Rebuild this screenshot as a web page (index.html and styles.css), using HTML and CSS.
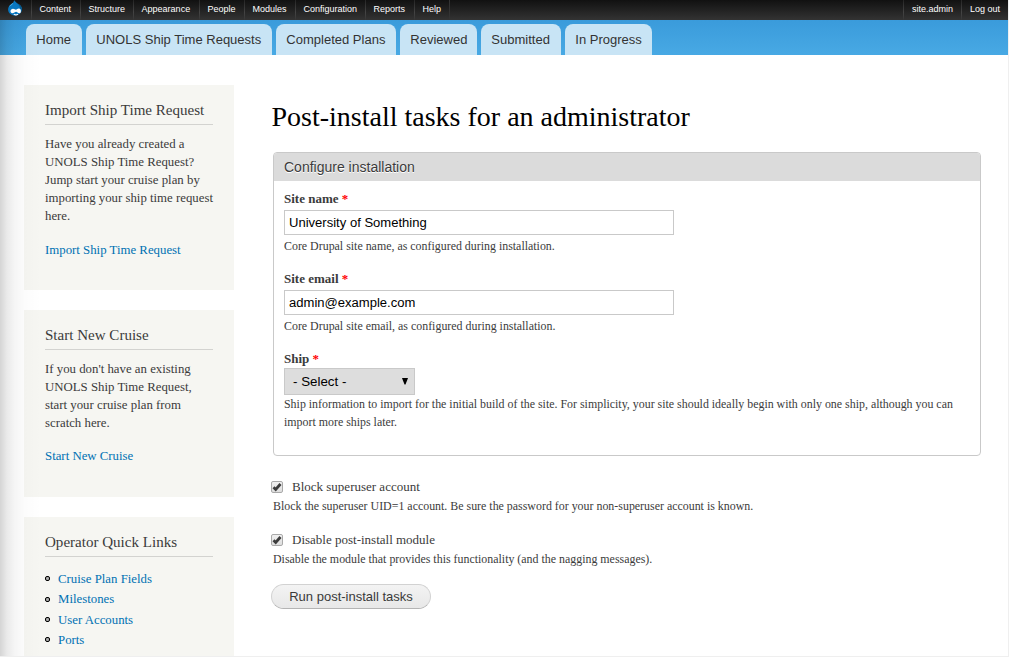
FILE: index.html
```html
<!DOCTYPE html>
<html lang="en">
<head>
<meta charset="utf-8">
<title>Post-install tasks for an administrator</title>
<link rel="stylesheet" href="styles.css">
</head>
<body>
<div class="page">
  <nav class="toolbar">
    <a class="logo" href="#" aria-label="Home">
      <svg width="14" height="16" viewBox="0 0 14 16">
        <path d="M6.2.2C6.4 2 4.9 3 3.2 4.2 1.500 5.400.1 7 .1 9.500c0 3.400 3.100 6.100 6.900 6.100s6.900-2.700 6.900-6.300c0-2.500-1.500-4-3.400-5.200C8.900 3.100 7.700 2.300 6.200.2z" fill="#0877c0"/>
        <path d="M6.2.2C6.400 2 4.900 3 3.200 4.200 2.200 4.900 1.300 5.700.8 6.700c3-1 4.600-3 5.400-6.500z" fill="#4bafe5"/>
        <path d="M8.500 3c2 1.600 3.600 3.200 3.600 5.800 0 1 .7 1.200 1.500 2.200.9-3-.5-5.400-3.100-6.900z" fill="#075789"/>
        <path d="M2.500 11.300c0-1.700 1.200-2.600 2.500-2.600 1.400 0 2.100 1 2.900 1 .9 0 1.600-1.200 3-1.200 1.300 0 2 1 2 2.500s-.5 2.300-1.600 2.300c-1.400 0-2.100-1.500-3.200-1.500s-2.300 1.400-3.800 1.400c-1.200 0-1.800-.8-1.800-1.900z" fill="#fff"/>
        <path d="M5.800 14.200c1.200.8 3 .8 4.200 0" fill="none" stroke="#fff" stroke-width="1.100"/>
      </svg>
    </a>
    <a class="item w49" href="#">Content</a>
    <a class="item w53" href="#">Structure</a>
    <a class="item w66" href="#">Appearance</a>
    <a class="item w45" href="#">People</a>
    <a class="item w51" href="#">Modules</a>
    <a class="item w70" href="#">Configuration</a>
    <a class="item w49" href="#">Reports</a>
    <a class="item w35" href="#">Help</a>
    <span class="toolbar-end"></span>
    <a class="item user" href="#">site.admin</a>
    <a class="item logout" href="#">Log out</a>
  </nav>
  <header class="tabs">
    <a class="tab home" href="#">Home</a>
    <a class="tab requests" href="#">UNOLS Ship Time Requests</a>
    <a class="tab completed" href="#">Completed Plans</a>
    <a class="tab reviewed" href="#">Reviewed</a>
    <a class="tab submitted" href="#">Submitted</a>
    <a class="tab progress" href="#">In Progress</a>
  </header>
  <div class="columns">
    <aside class="sidebar">
      <section class="block import">
        <h2>Import Ship Time Request</h2>
        <p>Have you already created a<br>UNOLS Ship Time Request?<br>Jump start your cruise plan by<br>importing your ship time request<br>here.</p>
        <a href="#">Import Ship Time Request</a>
      </section>
      <section class="block start">
        <h2>Start New Cruise</h2>
        <p>If you don't have an existing<br>UNOLS Ship Time Request,<br>start your cruise plan from<br>scratch here.</p>
        <a href="#">Start New Cruise</a>
      </section>
      <section class="block links">
        <h2>Operator Quick Links</h2>
        <ul>
          <li><a href="#">Cruise Plan Fields</a></li>
          <li><a href="#">Milestones</a></li>
          <li><a href="#">User Accounts</a></li>
          <li><a href="#">Ports</a></li>
        </ul>
      </section>
    </aside>
    <main class="content">
      <h1>Post-install tasks for an administrator</h1>
      <section class="fieldset">
        <div class="legend">Configure installation</div>
        <div class="fields">
          <div class="field">
            <label for="name">Site name <b>*</b></label>
            <input class="text" id="name" type="text" value="University of Something">
            <div class="description">Core Drupal site name, as configured during installation.</div>
          </div>
          <div class="field">
            <label for="email">Site email <b>*</b></label>
            <input class="text" id="email" type="text" value="admin@example.com">
            <div class="description">Core Drupal site email, as configured during installation.</div>
          </div>
          <div class="field ship">
            <label>Ship <b>*</b></label>
            <div class="select"><span>- Select -</span><svg width="6" height="7" viewBox="0 0 6 7"><path d="M0 0h6L3.500 6.500h-1z" fill="#000"/></svg></div>
            <div class="description">Ship information to import for the initial build of the site. For simplicity, your site should ideally begin with only one ship, although you can<br>import more ships later.</div>
          </div>
        </div>
      </section>
      <div class="option">
        <div class="option-label"><span class="checkbox"><svg width="10" height="10" viewBox="0 0 10 10"><path d="M1.500 5.200 3.700 7.400 8.500 2" fill="none" stroke="#3c3c3c" stroke-width="2.800"/></svg></span>Block superuser account</div>
        <div class="description">Block the superuser UID=1 account. Be sure the password for your non-superuser account is known.</div>
      </div>
      <div class="option">
        <div class="option-label"><span class="checkbox"><svg width="10" height="10" viewBox="0 0 10 10"><path d="M1.500 5.200 3.700 7.400 8.500 2" fill="none" stroke="#3c3c3c" stroke-width="2.800"/></svg></span>Disable post-install module</div>
        <div class="description">Disable the module that provides this functionality (and the nagging messages).</div>
      </div>
      <button class="run" type="button">Run post-install tasks</button>
    </main>
  </div>
  <div class="edge-shadow"></div>
</div>
</body>
</html>
```

FILE: styles.css
```css
*, *::before { box-sizing: border-box; }
html, body { margin: 0; height: 657px; overflow: hidden; }
body { background: #efefef; color: #3b3b3b; font-family: "Liberation Serif", serif; font-size: 13px; line-height: 18px; }
a { color: #0071b3; text-decoration: none; }
.page { position: relative; width: 1008px; height: 656px; background: #fff; overflow: hidden; }

.toolbar { display: flex; height: 20px; background: linear-gradient(#111, #333); font: 9px/18px "Liberation Sans", sans-serif; }
.logo { width: 31px; height: 20px; padding-left: 8px; }
.logo svg { display: block; }
.item { height: 20px; padding-left: 7.600px; border-left: 1px solid; border-image: linear-gradient(#222, #444 60%, #333) 1; color: #fff; white-space: nowrap; }
.w49 { width: 49px; }
.w53 { width: 53px; }
.w66 { width: 66px; }
.w45 { width: 45px; }
.w51 { width: 51px; }
.w70 { width: 70px; }
.w35 { width: 35px; }
.toolbar-end { flex: 1; border-left: 1px solid #333; }
.user { width: 58px; padding-left: 8px; }
.logout { width: 47px; padding-left: 8px; }

.tabs { display: flex; gap: 4px; height: 35px; padding: 4px 0 0 26px; background: linear-gradient(#3a9bdb, #48a9e4); }
.tab { height: 31px; border-radius: 8px 8px 0 0; background: #c8e4f5; color: #333; font: 13.030px/31px "Liberation Sans", sans-serif; padding-left: 10.300px; white-space: nowrap; }
.home { width: 56px; }
.requests { width: 186px; }
.completed { width: 120px; }
.reviewed { width: 77px; }
.submitted { width: 80px; }
.progress { width: 87px; }

.columns { display: flex; gap: 37px; padding: 30px 0 0 24px; }
.sidebar { display: flex; flex-direction: column; gap: 20px; width: 210px; }
.block { padding: 15px 21px; background: #f6f6f2; font-size: 12.820px; white-space: nowrap; }
.import { height: 205px; }
.start { height: 187px; }
.links { height: 160px; }
.block h2 { width: 168px; height: 25px; margin: 0 0 10px; border-bottom: 1px solid #d3d3d0; font-size: 15.050px; font-weight: normal; line-height: 20px; }
.block p { margin: 0 0 16px; }
.start p { margin-bottom: 15px; }
.links ul { margin: 12px 0 0; padding: 0; list-style: none; line-height: 20.4px; }
.links li { display: flex; align-items: center; gap: 8px; }
.links li::before { content: ""; width: 5px; height: 5px; margin-top: -1px; border: 1px solid #000; border-radius: 2px; background: #aaa; }

.content { width: 710px; }
h1 { height: 36px; margin: 14px 0 17px; padding-left: .5px; color: #000; font-size: 28px; font-weight: normal; line-height: 36px; white-space: nowrap; }
.fieldset { width: 708px; height: 304px; margin: 0 0 22px 2px; border: 1px solid #c9c9c9; border-radius: 4px; overflow: hidden; }
.legend { height: 28px; padding-left: 10px; background: #dbdbdb; color: #3b3b3b; font: 14px/28px "Liberation Sans", sans-serif; text-shadow: 0 1px 0 #fff; }
.fields { padding: 9px 10px; }
.field { height: 80px; }
.field label { display: block; height: 20px; font-weight: bold; white-space: nowrap; }
.field b { color: #f00; }
.text { display: block; width: 390px; height: 25px; padding: 0 4px; border: 1px solid #c9c9c9; background: #fff; color: #000; font: 13.050px "Liberation Sans", sans-serif; }
.description { margin-top: 2px; font-size: 11.910px; line-height: 18px; white-space: nowrap; }
.ship label { height: 18px; }
.select { display: flex; align-items: center; justify-content: space-between; width: 131px; height: 27px; padding: 0 6px 0 8px; border: 1px solid #c9c9c9; background: #ddd; color: #000; font: 13.333px "Liberation Sans", sans-serif; }
.ship .description { margin-top: 0; }
.option { height: 53px; }
.option-label { display: flex; align-items: center; gap: 9px; height: 18px; }
.option .description { margin: 1px 0 0 2px; }
.checkbox { width: 12px; height: 12px; border: 1px solid #a9a9a9; border-radius: 2px; background: linear-gradient(#f0f0f0, #dedede); }
.checkbox svg { display: block; }
.run { display: block; width: 160px; height: 25px; padding: 0; border: 1px solid #d2d2d2; border-bottom-color: #b4b4b4; border-radius: 13px; background: linear-gradient(#f3f3f3, #e8e8e8); color: #3a3a3a; font: 13px "Liberation Sans", sans-serif; text-align: center; }

.edge-shadow { position: absolute; inset: 20px auto 0 0; width: 42px; pointer-events: none; background: linear-gradient(to right, rgba(0,0,0,.17), rgba(0,0,0,.085) 16%, rgba(0,0,0,.04) 35%, rgba(0,0,0,.012) 60%, transparent); }
```
